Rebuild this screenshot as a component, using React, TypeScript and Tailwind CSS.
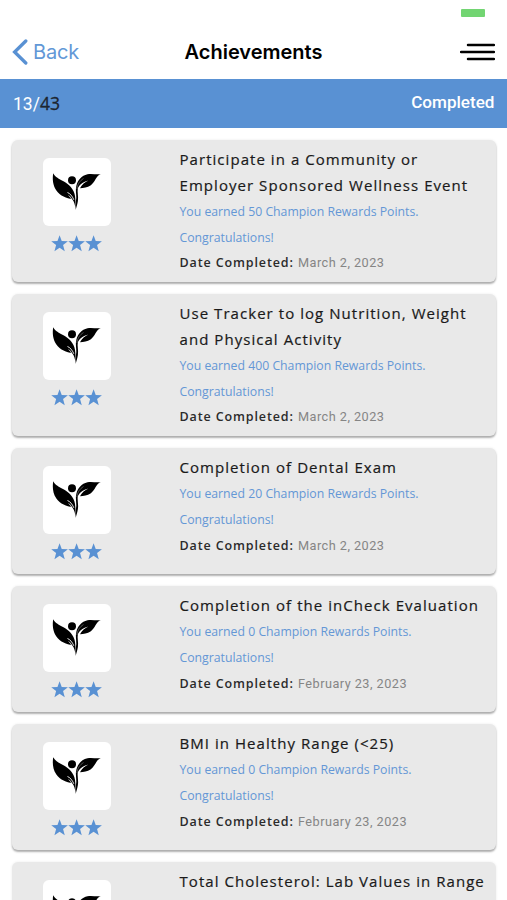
type Achievement = { lines: string[]; points: number; date: string };

const achievements: Achievement[] = [
  { lines: ["Participate in a Community or", "Employer Sponsored Wellness Event"], points: 50, date: "March 2, 2023" },
  { lines: ["Use Tracker to log Nutrition, Weight", "and Physical Activity"], points: 400, date: "March 2, 2023" },
  { lines: ["Completion of Dental Exam"], points: 20, date: "March 2, 2023" },
  { lines: ["Completion of the inCheck Evaluation"], points: 0, date: "February 23, 2023" },
  { lines: ["BMI in Healthy Range (<25)"], points: 0, date: "February 23, 2023" },
];

const nextTitle = "Total Cholesterol: Lab Values in Range";

function LeafLogo() {
  return (
    <svg viewBox="0 0 68 68" className="size-[68px]" aria-hidden="true">
      <circle cx="29" cy="22.300" r="4" fill="#000" />
      <path d="M10.200 15.300C12.500 19.500 16 20.800 20 23C26 26.500 30.800 30.500 32 38C32.500 42 32.800 46 32.600 51C32 47 31.300 43.500 29 41C24 40.500 17 38 13.200 32.300C9.800 27 9.300 21 10.200 15.300Z" fill="#000" />
      <path d="M24.500 34.500C27 35.500 29.300 38 30.800 41.800" stroke="#fff" strokeWidth="0.900" fill="none" />
      <path d="M25.800 37.500C27 38.600 27.800 39.600 28.600 41" stroke="#fff" strokeWidth="0.800" fill="none" />
      <path d="M57.700 16.100C52.500 18.500 52.500 24 47.500 27.500C44.500 29.600 40.500 29.800 37 30.200C38.500 27 41.500 24.300 45.500 22.500C41 23.500 37.300 25.500 34.900 30C34 34 35.700 38 34.900 43C34.300 46.500 33.600 48.500 32.700 52C33 47 32.600 44 33.300 40C33.400 36 32.300 32 33.300 28C34.800 22 38.500 17.500 44.500 16.200C49 15.300 53 16.800 57.700 16.100Z" fill="#000" />
      <path d="M33.800 31C34.200 26.500 37 22.500 40.500 20.500" stroke="#fff" strokeWidth="0.500" fill="none" opacity="0.600" />
    </svg>
  );
}

function Star() {
  return (
    <svg viewBox="0 0 24 24" className="h-[17px] w-[17.200px]" aria-hidden="true">
      <path d="M12 .3L15 8.500L23.800 8.800L16.900 14.200L19.300 22.900L12 17.900L4.700 22.900L7.100 14.200L.2 8.800L9 8.500Z" fill="#5991d3" />
    </svg>
  );
}

function Badge() {
  return (
    <div className="flex w-[167.500px] shrink-0 flex-col items-start pl-[31px] pt-[11px]">
      <div className="size-[68px] rounded-[6px] bg-white">
        <LeafLogo />
      </div>
      <div className="ml-[8px] mt-[9px] flex">
        <Star />
        <Star />
        <Star />
      </div>
    </div>
  );
}

function Title({ lines }: { lines: string[] }) {
  return (
    <h2 className="text-[15px] tracking-[1.050px] text-[#1a1a1a] [-webkit-text-stroke:0.200px_#1a1a1a]">
      {lines.map((line) => (
        <span key={line} className="block">{line}</span>
      ))}
    </h2>
  );
}

function Card({ item }: { item: Achievement }) {
  return (
    <article
      className={`flex shrink-0 rounded-[6px] bg-[#e9e9e9] pt-[7px] shadow-[0_2px_2px_rgba(0,0,0,0.3),0_0_3px_rgba(0,0,0,0.08)] ${
        item.lines.length > 1 ? "h-[142px]" : "h-[126px]"
      }`}
    >
      <Badge />
      <div className="whitespace-nowrap font-['Open_Sans',sans-serif] leading-[25.700px]">
        <Title lines={item.lines} />
        <div className="pt-[0.600px]">
          <p className="text-[12.250px] text-[#6497d6]">
            You earned {item.points} Champion Rewards Points.
            <br />
            Congratulations!
          </p>
          <p className="text-[12.500px] font-semibold tracking-[0.880px] text-[#2b2b2b]">
            Date Completed:{" "}
            <span className="font-['Roboto',sans-serif] text-[12.700px] font-normal tracking-[0.480px] text-[#858585]">{item.date}</span>
          </p>
        </div>
      </div>
    </article>
  );
}

export default function App() {
  return (
    <div className="flex h-[900px] w-[507px] flex-col overflow-hidden bg-white">
      <div className="flex h-[25px] shrink-0 justify-end pr-[22px] pt-[9px]">
        <div className="h-[8px] w-[24px] rounded-[1px] bg-[#72d572]" />
      </div>
      <header className="grid h-[54px] shrink-0 grid-cols-3 items-center pl-[12px] pr-[12px] font-['Inter',sans-serif]">
        <div className="flex items-center gap-[5px] text-[#6298d7]">
          <svg viewBox="0 0 16 26" className="h-[26px] w-[16px]" fill="none" aria-hidden="true">
            <path d="M13.800 2L2.600 13L13.800 24" stroke="#5991d3" strokeWidth="3.300" strokeLinecap="round" strokeLinejoin="miter" />
          </svg>
          <span className="text-[20px] tracking-[-0.200px]">Back</span>
        </div>
        <h1 className="whitespace-nowrap text-center text-[20px] font-semibold tracking-[0px] text-black">Achievements</h1>
        <svg viewBox="0 0 35 18" className="h-[18px] w-[35px] justify-self-end" aria-hidden="true">
          <path d="M8 2H34M1 9H34M8 16H34" stroke="#000" strokeWidth="2.500" strokeLinecap="round" />
        </svg>
      </header>
      <div className="flex h-[49px] shrink-0 items-center justify-between bg-[#5991d3] pl-[13px] pr-[12.500px] font-['Roboto',sans-serif]">
        <div className="text-[17.500px] text-white">
          13/<span className="font-['Open_Sans',sans-serif] text-[#1d2530] [-webkit-text-stroke:0.300px_#1d2530]">43</span>
        </div>
        <div className="-mt-[2px] text-[17.100px] font-medium text-white">Completed</div>
      </div>
      <main className="flex min-h-0 flex-1 flex-col gap-[12px] overflow-hidden pl-[12px] pr-[11px] pt-[12px]">
        {achievements.map((item) => (
          <Card key={item.lines[0]} item={item} />
        ))}
        <article className="flex h-[126px] shrink-0 rounded-[6px] bg-[#e9e9e9] pt-[7px] shadow-[0_0_3px_rgba(0,0,0,0.08)]">
          <Badge />
          <div className="whitespace-nowrap font-['Open_Sans',sans-serif] leading-[25.700px]">
            <Title lines={[nextTitle]} />
          </div>
        </article>
      </main>
    </div>
  );
}
